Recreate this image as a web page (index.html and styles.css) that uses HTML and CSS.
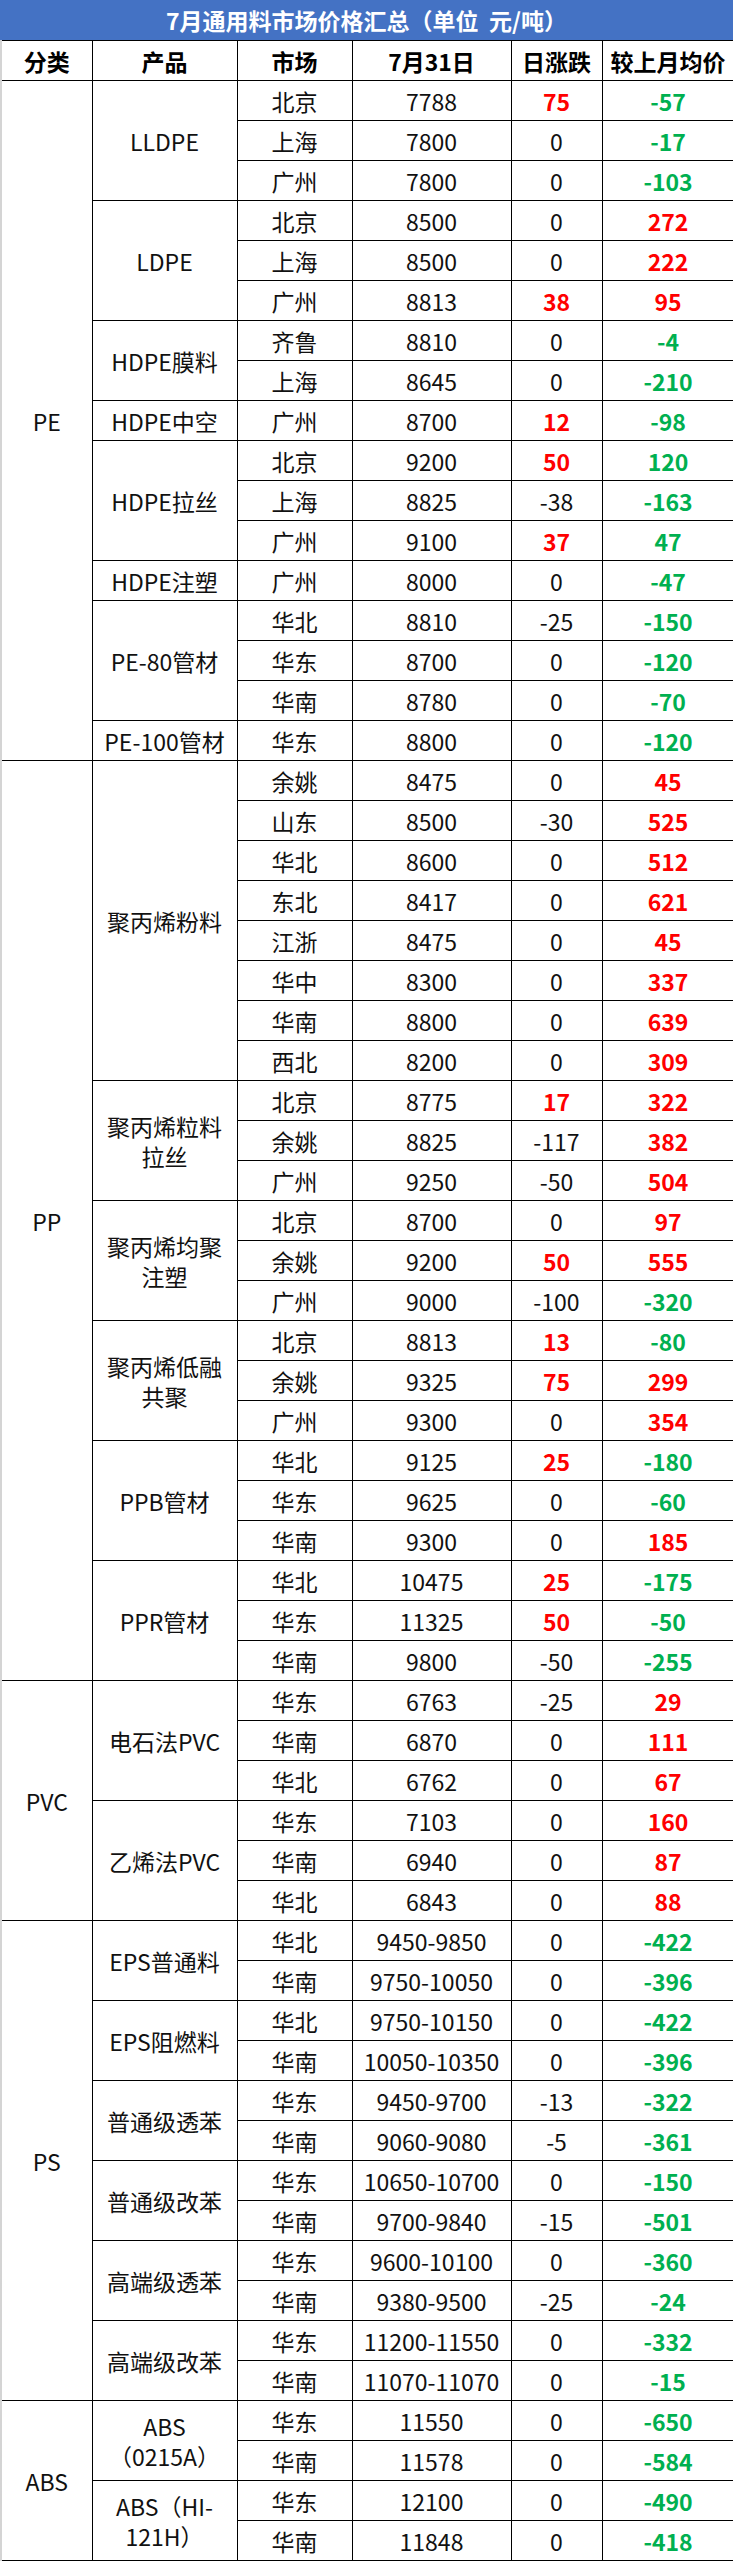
FILE: index.html
```html
<!DOCTYPE html>
<html lang="zh-CN">
<head>
<meta charset="utf-8">
<title>7月通用料市场价格汇总</title>
<link rel="stylesheet" href="styles.css">
</head>
<body>
<div class="sheet">
  <div class="title">7月通用料市场价格汇总（单位&nbsp;&nbsp;元/吨）</div>
  <table class="grid">
    <colgroup>
      <col class="c1"><col class="c2"><col class="c3"><col class="c4"><col class="c5"><col class="c6">
    </colgroup>
    <thead>
      <tr><th class="cat">分类</th><th>产品</th><th>市场</th><th>7月31日</th><th>日涨跌</th><th>较上月均价</th></tr>
    </thead>
    <tbody>
      <tr><td rowspan="17" class="cat">PE</td><td rowspan="3">LLDPE</td><td>北京</td><td>7788</td><td class="r">75</td><td class="g">-57</td></tr>
      <tr><td>上海</td><td>7800</td><td>0</td><td class="g">-17</td></tr>
      <tr><td>广州</td><td>7800</td><td>0</td><td class="g">-103</td></tr>
      <tr><td rowspan="3">LDPE</td><td>北京</td><td>8500</td><td>0</td><td class="r">272</td></tr>
      <tr><td>上海</td><td>8500</td><td>0</td><td class="r">222</td></tr>
      <tr><td>广州</td><td>8813</td><td class="r">38</td><td class="r">95</td></tr>
      <tr><td rowspan="2">HDPE膜料</td><td>齐鲁</td><td>8810</td><td>0</td><td class="g">-4</td></tr>
      <tr><td>上海</td><td>8645</td><td>0</td><td class="g">-210</td></tr>
      <tr><td>HDPE中空</td><td>广州</td><td>8700</td><td class="r">12</td><td class="g">-98</td></tr>
      <tr><td rowspan="3">HDPE拉丝</td><td>北京</td><td>9200</td><td class="r">50</td><td class="g">120</td></tr>
      <tr><td>上海</td><td>8825</td><td>-38</td><td class="g">-163</td></tr>
      <tr><td>广州</td><td>9100</td><td class="r">37</td><td class="g">47</td></tr>
      <tr><td>HDPE注塑</td><td>广州</td><td>8000</td><td>0</td><td class="g">-47</td></tr>
      <tr><td rowspan="3">PE-80管材</td><td>华北</td><td>8810</td><td>-25</td><td class="g">-150</td></tr>
      <tr><td>华东</td><td>8700</td><td>0</td><td class="g">-120</td></tr>
      <tr><td>华南</td><td>8780</td><td>0</td><td class="g">-70</td></tr>
      <tr><td>PE-100管材</td><td>华东</td><td>8800</td><td>0</td><td class="g">-120</td></tr>

      <tr><td rowspan="23" class="cat">PP</td><td rowspan="8">聚丙烯粉料</td><td>余姚</td><td>8475</td><td>0</td><td class="r">45</td></tr>
      <tr><td>山东</td><td>8500</td><td>-30</td><td class="r">525</td></tr>
      <tr><td>华北</td><td>8600</td><td>0</td><td class="r">512</td></tr>
      <tr><td>东北</td><td>8417</td><td>0</td><td class="r">621</td></tr>
      <tr><td>江浙</td><td>8475</td><td>0</td><td class="r">45</td></tr>
      <tr><td>华中</td><td>8300</td><td>0</td><td class="r">337</td></tr>
      <tr><td>华南</td><td>8800</td><td>0</td><td class="r">639</td></tr>
      <tr><td>西北</td><td>8200</td><td>0</td><td class="r">309</td></tr>
      <tr><td rowspan="3" class="wrap">聚丙烯粒料<br>拉丝</td><td>北京</td><td>8775</td><td class="r">17</td><td class="r">322</td></tr>
      <tr><td>余姚</td><td>8825</td><td>-117</td><td class="r">382</td></tr>
      <tr><td>广州</td><td>9250</td><td>-50</td><td class="r">504</td></tr>
      <tr><td rowspan="3" class="wrap">聚丙烯均聚<br>注塑</td><td>北京</td><td>8700</td><td>0</td><td class="r">97</td></tr>
      <tr><td>余姚</td><td>9200</td><td class="r">50</td><td class="r">555</td></tr>
      <tr><td>广州</td><td>9000</td><td>-100</td><td class="g">-320</td></tr>
      <tr><td rowspan="3" class="wrap">聚丙烯低融<br>共聚</td><td>北京</td><td>8813</td><td class="r">13</td><td class="g">-80</td></tr>
      <tr><td>余姚</td><td>9325</td><td class="r">75</td><td class="r">299</td></tr>
      <tr><td>广州</td><td>9300</td><td>0</td><td class="r">354</td></tr>
      <tr><td rowspan="3">PPB管材</td><td>华北</td><td>9125</td><td class="r">25</td><td class="g">-180</td></tr>
      <tr><td>华东</td><td>9625</td><td>0</td><td class="g">-60</td></tr>
      <tr><td>华南</td><td>9300</td><td>0</td><td class="r">185</td></tr>
      <tr><td rowspan="3">PPR管材</td><td>华北</td><td>10475</td><td class="r">25</td><td class="g">-175</td></tr>
      <tr><td>华东</td><td>11325</td><td class="r">50</td><td class="g">-50</td></tr>
      <tr><td>华南</td><td>9800</td><td>-50</td><td class="g">-255</td></tr>

      <tr><td rowspan="6" class="cat">PVC</td><td rowspan="3">电石法PVC</td><td>华东</td><td>6763</td><td>-25</td><td class="r">29</td></tr>
      <tr><td>华南</td><td>6870</td><td>0</td><td class="r">111</td></tr>
      <tr><td>华北</td><td>6762</td><td>0</td><td class="r">67</td></tr>
      <tr><td rowspan="3">乙烯法PVC</td><td>华东</td><td>7103</td><td>0</td><td class="r">160</td></tr>
      <tr><td>华南</td><td>6940</td><td>0</td><td class="r">87</td></tr>
      <tr><td>华北</td><td>6843</td><td>0</td><td class="r">88</td></tr>

      <tr><td rowspan="12" class="cat">PS</td><td rowspan="2">EPS普通料</td><td>华北</td><td>9450-9850</td><td>0</td><td class="g">-422</td></tr>
      <tr><td>华南</td><td>9750-10050</td><td>0</td><td class="g">-396</td></tr>
      <tr><td rowspan="2">EPS阻燃料</td><td>华北</td><td>9750-10150</td><td>0</td><td class="g">-422</td></tr>
      <tr><td>华南</td><td>10050-10350</td><td>0</td><td class="g">-396</td></tr>
      <tr><td rowspan="2">普通级透苯</td><td>华东</td><td>9450-9700</td><td>-13</td><td class="g">-322</td></tr>
      <tr><td>华南</td><td>9060-9080</td><td>-5</td><td class="g">-361</td></tr>
      <tr><td rowspan="2">普通级改苯</td><td>华东</td><td>10650-10700</td><td>0</td><td class="g">-150</td></tr>
      <tr><td>华南</td><td>9700-9840</td><td>-15</td><td class="g">-501</td></tr>
      <tr><td rowspan="2">高端级透苯</td><td>华东</td><td>9600-10100</td><td>0</td><td class="g">-360</td></tr>
      <tr><td>华南</td><td>9380-9500</td><td>-25</td><td class="g">-24</td></tr>
      <tr><td rowspan="2">高端级改苯</td><td>华东</td><td>11200-11550</td><td>0</td><td class="g">-332</td></tr>
      <tr><td>华南</td><td>11070-11070</td><td>0</td><td class="g">-15</td></tr>

      <tr><td rowspan="4" class="cat">ABS</td><td rowspan="2" class="wrap">ABS<br>（0215A）</td><td>华东</td><td>11550</td><td>0</td><td class="g">-650</td></tr>
      <tr><td>华南</td><td>11578</td><td>0</td><td class="g">-584</td></tr>
      <tr><td rowspan="2" class="wrap">ABS（HI-<br>121H）</td><td>华东</td><td>12100</td><td>0</td><td class="g">-490</td></tr>
      <tr><td>华南</td><td>11848</td><td>0</td><td class="g">-418</td></tr>
    </tbody>
  </table>
</div>
</body>
</html>
```

FILE: styles.css
```css
* { box-sizing: border-box; }
html, body { margin: 0; padding: 0; background: #ffffff; }
body {
  font-family: "Noto Sans CJK SC", "Noto Sans", sans-serif;
  color: #111111;
}
.sheet { width: 733px; }
.title {
  height: 40px;
  line-height: 40px;
  background: #4472C4;
  color: #ffffff;
  font-weight: bold;
  font-size: 23px;
  text-align: center;
}
.grid {
  width: 733px;
  border-collapse: collapse;
  table-layout: fixed;
  font-size: 23px;
}
.c1 { width: 91px; }
.c2 { width: 145px; }
.c3 { width: 115px; }
.c4 { width: 159px; }
.c5 { width: 91px; }
.c6 { width: 132px; }
.grid th, .grid td {
  height: 40px;
  padding: 0;
  border: 1px solid #000000;
  text-align: center;
  vertical-align: middle;
  line-height: 30px;
  white-space: nowrap;
}
.grid .cat { border-left: 2px solid #d4d4d4; }
.grid th { font-weight: bold; color: #000000; }
.grid td.r { color: #FF0000; font-weight: bold; }
.grid td.g { color: #00B050; font-weight: bold; }
.grid td.wrap { line-height: 30px; }
```
